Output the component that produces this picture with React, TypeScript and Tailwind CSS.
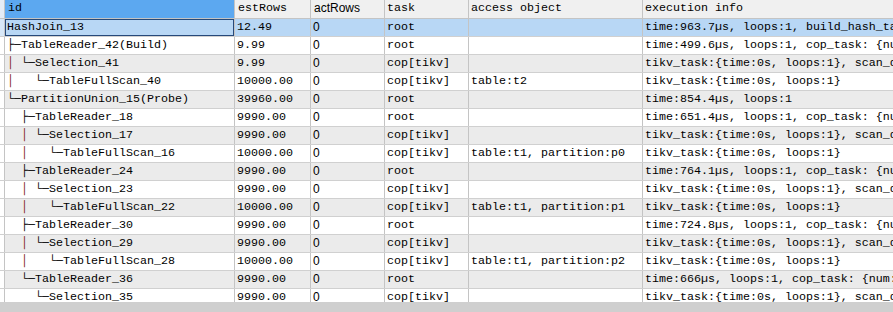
import React from "react";

type Row = {
  prefix: string;
  name: string;
  est: string;
  task: string;
  access: string;
  exec: string;
};

const rows: Row[] = [
  { prefix: "", name: "HashJoin_13", est: "12.49", task: "root", access: "", exec: "time:963.7µs, loops:1, build_hash_table:{total:652.1µs, fetch:600µs, build:52µs}" },
  { prefix: "├─", name: "TableReader_42(Build)", est: "9.99", task: "root", access: "", exec: "time:499.6µs, loops:1, cop_task: {num: 1, max: 481µs}" },
  { prefix: "│ └─", name: "Selection_41", est: "9.99", task: "cop[tikv]", access: "", exec: "tikv_task:{time:0s, loops:1}, scan_detail: {total_keys: 1}" },
  { prefix: "│   └─", name: "TableFullScan_40", est: "10000.00", task: "cop[tikv]", access: "table:t2", exec: "tikv_task:{time:0s, loops:1}" },
  { prefix: "└─", name: "PartitionUnion_15(Probe)", est: "39960.00", task: "root", access: "", exec: "time:854.4µs, loops:1" },
  { prefix: "  ├─", name: "TableReader_18", est: "9990.00", task: "root", access: "", exec: "time:651.4µs, loops:1, cop_task: {num: 1, max: 600µs}" },
  { prefix: "  │ └─", name: "Selection_17", est: "9990.00", task: "cop[tikv]", access: "", exec: "tikv_task:{time:0s, loops:1}, scan_detail: {total_keys: 1}" },
  { prefix: "  │   └─", name: "TableFullScan_16", est: "10000.00", task: "cop[tikv]", access: "table:t1, partition:p0", exec: "tikv_task:{time:0s, loops:1}" },
  { prefix: "  ├─", name: "TableReader_24", est: "9990.00", task: "root", access: "", exec: "time:764.1µs, loops:1, cop_task: {num: 1, max: 700µs}" },
  { prefix: "  │ └─", name: "Selection_23", est: "9990.00", task: "cop[tikv]", access: "", exec: "tikv_task:{time:0s, loops:1}, scan_detail: {total_keys: 1}" },
  { prefix: "  │   └─", name: "TableFullScan_22", est: "10000.00", task: "cop[tikv]", access: "table:t1, partition:p1", exec: "tikv_task:{time:0s, loops:1}" },
  { prefix: "  ├─", name: "TableReader_30", est: "9990.00", task: "root", access: "", exec: "time:724.8µs, loops:1, cop_task: {num: 1, max: 690µs}" },
  { prefix: "  │ └─", name: "Selection_29", est: "9990.00", task: "cop[tikv]", access: "", exec: "tikv_task:{time:0s, loops:1}, scan_detail: {total_keys: 1}" },
  { prefix: "  │   └─", name: "TableFullScan_28", est: "10000.00", task: "cop[tikv]", access: "table:t1, partition:p2", exec: "tikv_task:{time:0s, loops:1}" },
  { prefix: "  └─", name: "TableReader_36", est: "9990.00", task: "root", access: "", exec: "time:666µs, loops:1, cop_task: {num: 1, max: 640µs}" },
  { prefix: "    └─", name: "Selection_35", est: "9990.00", task: "cop[tikv]", access: "", exec: "tikv_task:{time:0s, loops:1}, scan_detail: {total_keys: 1}" },
];

const mono = "font-['Liberation_Mono',monospace] text-[11.67px]";
const sans = "font-['Liberation_Sans',Arial,sans-serif] text-[12px] pb-[2px]";

function Prefix({ text }: { text: string }) {
  return (
    <>
      {Array.from(text).map((ch, i) =>
        ch === "│" ? (
          <span key={i} className="text-[#7a1414]">
            {ch}
          </span>
        ) : (
          <span key={i}>{ch}</span>
        )
      )}
    </>
  );
}

export default function App() {
  return (
    <div className="w-[893px] h-[312px] bg-white overflow-hidden flex flex-col text-black">
      <div className="h-[302px] overflow-hidden flex flex-col">
        {/* header */}
        <div className="flex h-[19px] shrink-0 border-b border-[#c4c4c4] whitespace-pre">
          <div className="w-[5px] shrink-0 border-r border-[#c4c4c4] bg-[#e4ecf6]" />
          <div className={`w-[230px] shrink-0 border-r border-[#c4c4c4] bg-[#5ca8f0] pl-[3px] flex items-center ${mono}`}>id</div>
          <div className={`w-[76px] shrink-0 border-r border-[#c4c4c4] bg-[#f0f0f0] pl-[3px] flex items-center ${mono}`}>estRows</div>
          <div className={`w-[74px] shrink-0 border-r border-[#c4c4c4] bg-[#f0f0f0] pl-[3px] flex items-center ${sans}`}>actRows</div>
          <div className={`w-[84px] shrink-0 border-r border-[#c4c4c4] bg-[#f0f0f0] pl-[2px] flex items-center ${mono}`}>task</div>
          <div className={`w-[174px] shrink-0 border-r border-[#c4c4c4] bg-[#f0f0f0] pl-[2px] flex items-center ${mono}`}>access object</div>
          <div className={`flex-1 bg-[#f0f0f0] pl-[2px] flex items-center overflow-hidden ${mono}`}>execution info</div>
        </div>
        {rows.map((r, i) => {
          const selected = i === 0;
          const bg = selected ? "bg-[#b8d7f5]" : i % 2 === 0 ? "bg-[#ebebeb]" : "bg-white";
          return (
            <div key={i} className={`flex h-[18px] shrink-0 border-b border-[#d0d0d0] whitespace-pre ${bg}`}>
              <div className={`w-[5px] shrink-0 border-r border-[#c4c4c4] ${selected ? "bg-[#d8e8f8]" : "bg-white"}`} />
              <div
                className={`w-[230px] shrink-0 border-r border-[#c4c4c4] pl-[2px] flex items-center overflow-hidden ${mono} ${
                  selected ? "shadow-[inset_0_0_0_1px_#26497a]" : ""
                }`}
              >
                <Prefix text={r.prefix} />
                {r.name}
              </div>
              <div className={`w-[76px] shrink-0 border-r border-[#c4c4c4] pl-[2px] flex items-center overflow-hidden ${mono}`}>{r.est}</div>
              <div className={`w-[74px] shrink-0 border-r border-[#c4c4c4] pl-[2px] flex items-center overflow-hidden ${sans}`}>0</div>
              <div className={`w-[84px] shrink-0 border-r border-[#c4c4c4] pl-[2px] flex items-center overflow-hidden ${mono}`}>{r.task}</div>
              <div className={`w-[174px] shrink-0 border-r border-[#c4c4c4] pl-[2px] flex items-center overflow-hidden ${mono}`}>{r.access}</div>
              <div className={`flex-1 min-w-0 pl-[2px] flex items-center overflow-hidden ${mono}`}>{r.exec}</div>
            </div>
          );
        })}
      </div>
      <div className="flex-1 bg-[#cfcfcf]" />
    </div>
  );
}
